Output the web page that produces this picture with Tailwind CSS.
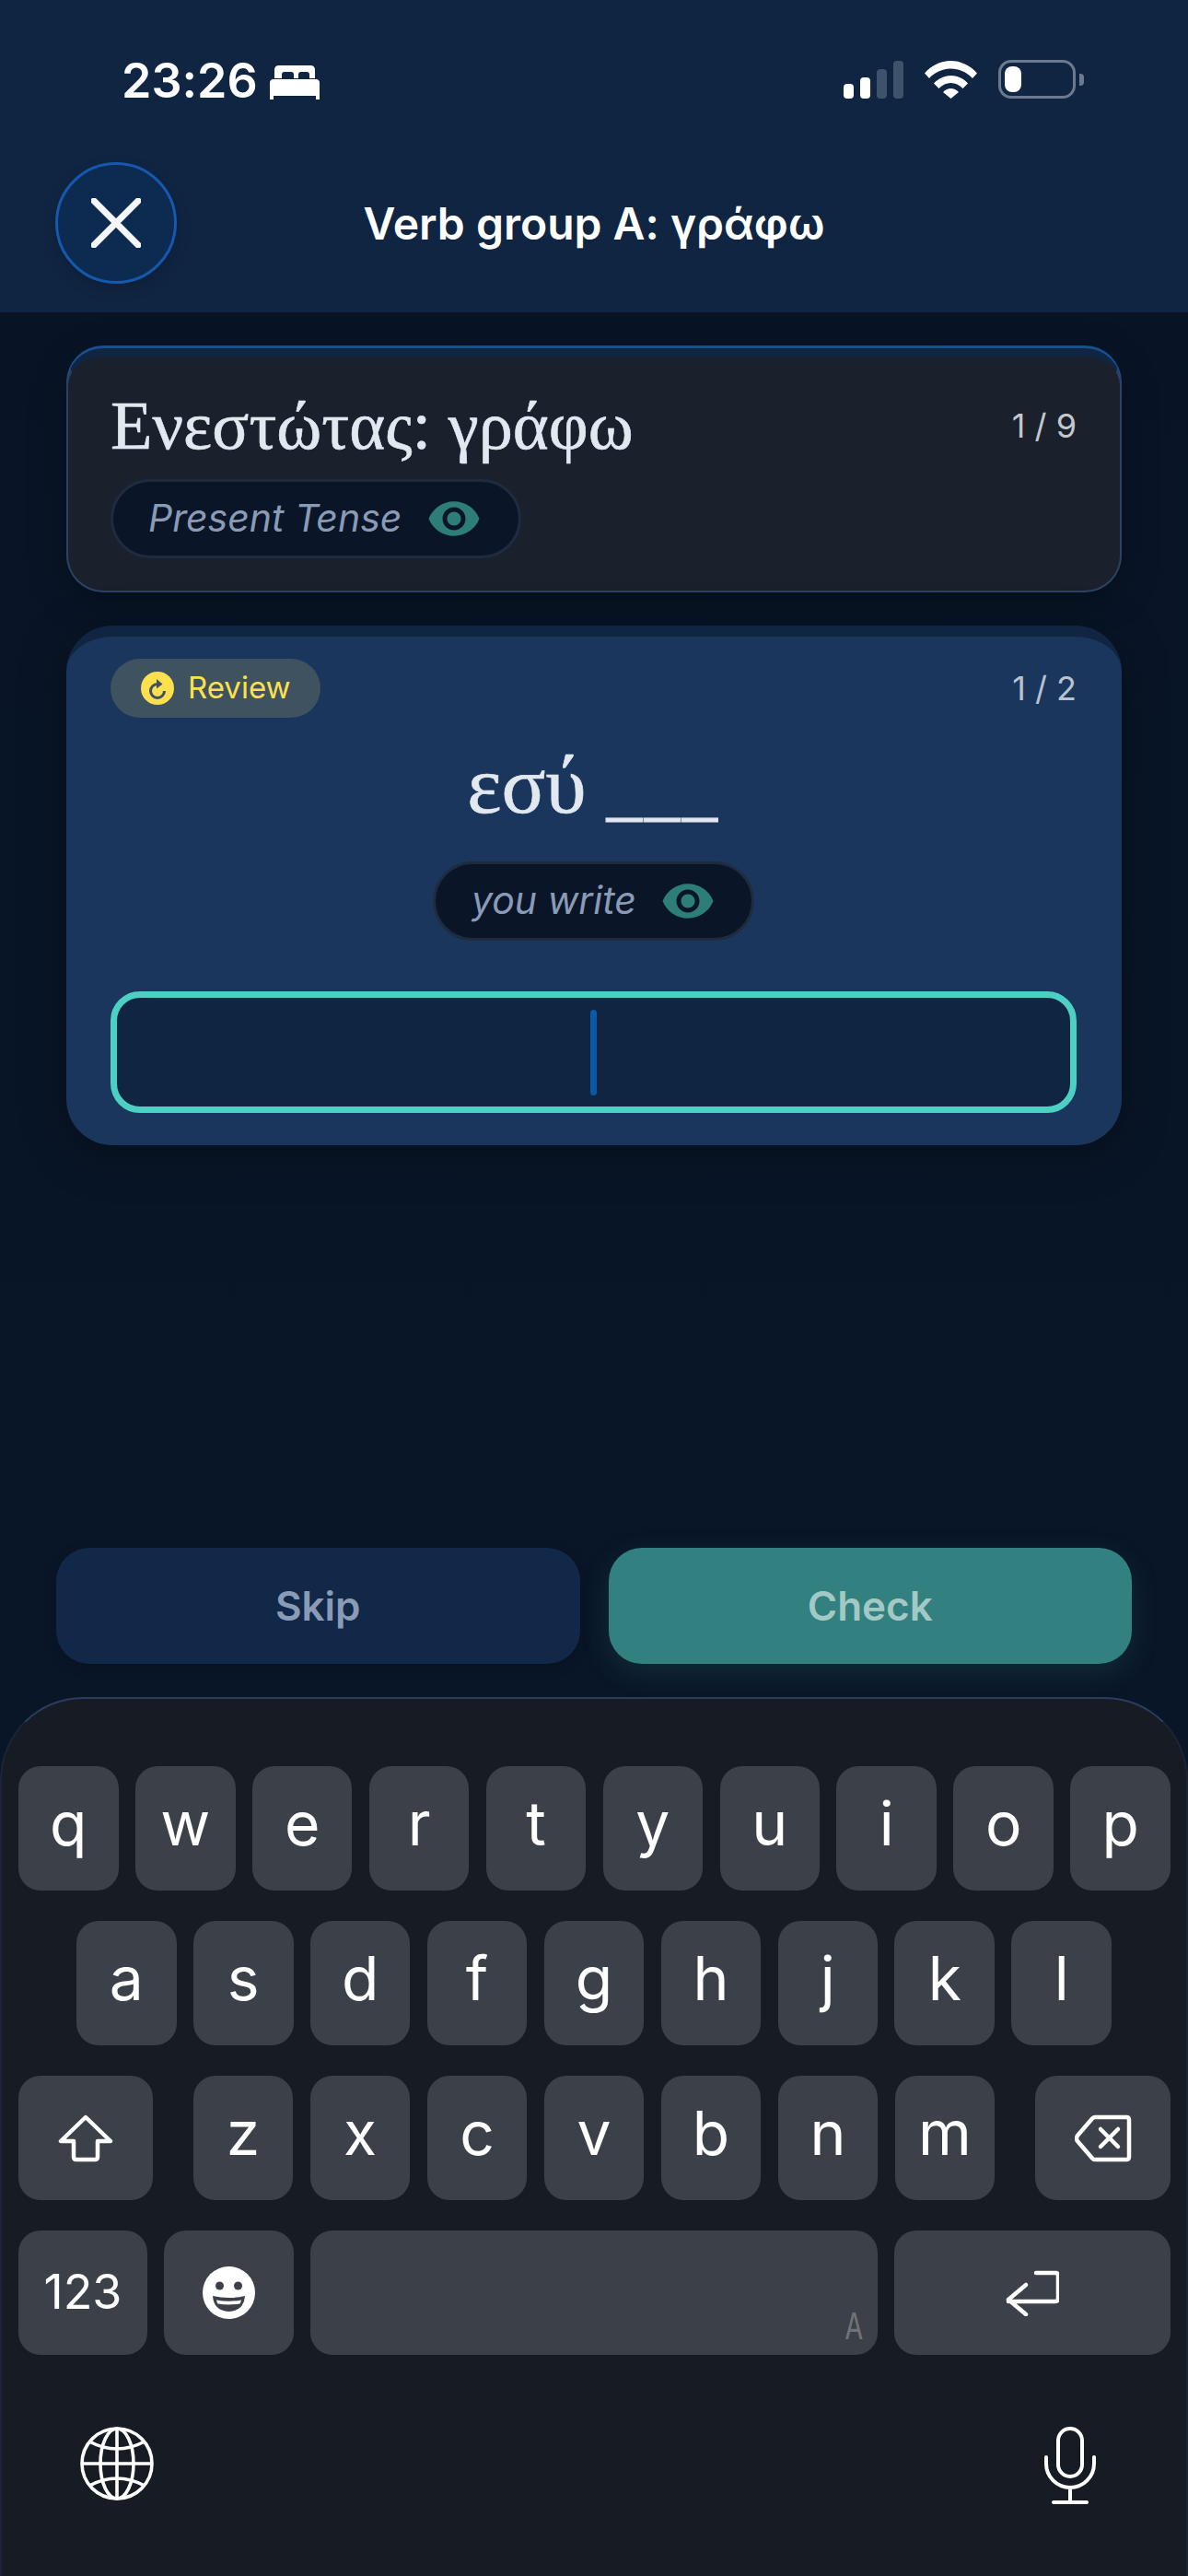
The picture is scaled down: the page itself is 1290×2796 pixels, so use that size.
<!DOCTYPE html>
<html lang="en">

<head>
    <meta charset="utf-8">
    <meta name="viewport" content="width=device-width, initial-scale=1">
    <title>Verb group A</title>
    <script src="https://cdn.jsdelivr.net/npm/@tailwindcss/browser@4"></script>
</head>

<body class="bg-[#081423]">
    <div class="relative w-[1290px] h-[2796px] flex flex-col font-['Inter',sans-serif] [font-feature-settings:'calt'_0] text-white bg-gradient-to-b from-[#081426] to-[#0a1729] overflow-hidden">

        <!-- header -->
        <header class="h-[339px] shrink-0 bg-[#102542]">
            <div class="flex justify-between items-center pt-[65px] pl-[132px] pr-[113px] h-[107px]">
                <div class="flex items-center gap-[13px]">
                    <span class="text-[52px] leading-[42px] font-semibold relative top-[2px]">23:26</span>
                    <svg class="w-[54px] h-[37px] relative top-[3px]" viewBox="0 0 54 37" fill="#fff">
                        <path d="M5 14V5q0-5 5-5h34q5 0 5 5v9h-6v-4q0-3-3-3h-6q-3 0-3 3v4h-5v-4q0-3-3-3h-7q-3 0-3 3v4z" />
                        <path d="M4 15h46q4 0 4 4v18h-4v-4H4v4H0V19q0-4 4-4z" />
                    </svg>
                </div>
                <div class="flex items-center">
                    <svg class="w-[65px] h-[41px]" viewBox="0 0 65 41">
                        <rect x="0" y="25" width="11" height="16" rx="4" fill="#fff" />
                        <rect x="18" y="18" width="11" height="23" rx="4" fill="#fff" />
                        <rect x="36" y="9" width="11" height="32" rx="4" fill="#3f526c" />
                        <rect x="54" y="0" width="11" height="41" rx="4" fill="#3f526c" />
                    </svg>
                    <svg class="ml-[23px] w-[57px] h-[41px]" viewBox="0 0 57 41" fill="#fff">
                        <path d="M0 13.500C16 -4.500 41 -4.500 57 13.500L52 19C39 5 18 5 5 19z" />
                        <path d="M10 24.500C20 13 37 13 47 24.500L41.500 30C34 22 23 22 15.500 30z" />
                        <path d="M20 34C25 28.500 32 28.500 37 34L28.500 41z" />
                    </svg>
                    <div class="ml-[23px] w-[84px] h-[42px] rounded-[14px] border-[3px] border-[#6b7a90] p-[4px]">
                        <div class="w-[18px] h-[28px] rounded-[8px] bg-white"></div>
                    </div>
                    <div class="ml-[4px] w-[5px] h-[13px] rounded-r-[4px] bg-[#6b7a90]"></div>
                </div>
            </div>
            <div class="grid grid-cols-[132px_1fr_132px] items-center mt-[69px] px-[60px]">
                <button class="w-[132px] h-[132px] rounded-full border-[3px] border-[#1558ad] bg-[#0d2a50] flex items-center justify-center shadow-[0_6px_16px_rgba(0,0,0,0.15)]">
                    <svg class="w-[54px] h-[54px]" viewBox="0 0 54 54" fill="none" stroke="#f4f6f8" stroke-width="7" stroke-linecap="round">
                        <path d="M3 3l48 48M51 3L3 51" />
                    </svg>
                </button>
                <h1 class="text-center text-[48px] font-semibold leading-none relative top-[1px]">Verb group A: γράφω</h1>
            </div>
        </header>

        <!-- cards -->
        <main class="flex-1 px-[72px] pt-[39px] flex flex-col gap-[36px]">
            <section class="h-[265px] rounded-[40px] bg-[#1a202c] border-2 border-[#2c4264] border-t-[9px] border-t-[#102542] shadow-[0_-3px_0_#174f91,0_8px_40px_rgba(0,0,0,0.3)] pl-[46px] pr-[47px]">
                <div class="flex justify-between items-start">
                    <h2 class="mt-[33px] text-[74.400px] leading-[84px] text-[#e2e8f0] font-['Liberation_Serif',serif] [-webkit-text-stroke:0.6px_#e2e8f0]">Ενεστώτας: γράφω</h2>
                    <span class="mt-[53px] text-[36px] leading-[44px] text-[#c4c8cd]">1 / 9</span>
                </div>
                <div class="mt-[16px] w-[446px] h-[86px] rounded-full border-[3px] border-[#1f2c40] bg-[#0a1628] flex items-center pl-[38px] gap-[27px]">
                    <span class="text-[41px] italic text-[#8a9bb5]">Present Tense</span>
                    <svg class="w-[60px] h-[60px]" viewBox="0 0 24 24" fill="#2d7d7a">
                        <path d="M12 4.500C7 4.500 2.730 7.610 1 12c1.730 4.390 6 7.500 11 7.500s9.270-3.110 11-7.500c-1.730-4.390-6-7.500-11-7.500zM12 17c-2.760 0-5-2.240-5-5s2.240-5 5-5 5 2.240 5 5-2.240 5-5 5zm0-8c-1.660 0-3 1.340-3 3s1.340 3 3 3 3-1.340 3-3-1.340-3-3-3z" />
                    </svg>
                </div>
            </section>

            <section class="h-[564px] rounded-[50px] bg-[#1b365d] border-t-[12px] border-t-[#102542] shadow-[0_10px_50px_rgba(0,0,0,0.35)] pl-[48px] pr-[49px] pt-[24px]">
                <div class="flex justify-between items-center">
                    <div class="w-[228px] h-[64px] rounded-full bg-[#3f5260] flex items-center pl-[33px] gap-[15px]">
                        <svg class="w-[36px] h-[36px]" viewBox="0 0 36 36">
                            <circle cx="18" cy="18" r="18" fill="#fde04f" />
                            <path d="M18 13.500A7.500 7.500 0 1 0 25.500 21" fill="none" stroke="#3f5260" stroke-width="3" />
                            <path d="M17 8l6.500 5.500-6.500 5z" fill="#3f5260" />
                        </svg>
                        <span class="text-[33px] text-[#fde04f]">Review</span>
                    </div>
                    <span class="text-[36px] leading-[44px] text-[#b9c2ce]">1 / 2</span>
                </div>
                <p class="mt-[27px] text-center text-[89px] leading-[92px] text-[#e2e8f0] font-['Liberation_Serif',serif] [-webkit-text-stroke:0.6px_#e2e8f0]">εσύ <span class="text-[76px] tracking-[3px] [-webkit-text-stroke:1.2px_#e2e8f0]">___</span></p>
                <div class="mt-[33px] flex justify-center">
                    <div class="w-[349px] h-[86px] rounded-full border-[3px] border-[#1f2c40] bg-[#0a1628] flex items-center pl-[39px] gap-[26px]">
                        <span class="text-[41px] italic text-[#8a9bb5]">you write</span>
                        <svg class="w-[60px] h-[60px]" viewBox="0 0 24 24" fill="#2d7d7a">
                            <path d="M12 4.500C7 4.500 2.730 7.610 1 12c1.730 4.390 6 7.500 11 7.500s9.270-3.110 11-7.500c-1.730-4.390-6-7.500-11-7.500zM12 17c-2.760 0-5-2.240-5-5s2.240-5 5-5 5 2.240 5 5-2.240 5-5 5zm0-8c-1.660 0-3 1.340-3 3s1.340 3 3 3 3-1.340 3-3-1.340-3-3-3z" />
                        </svg>
                    </div>
                </div>
                <div class="mt-[55px] h-[132px] rounded-[32px] border-[7px] border-[#4dd0c4] bg-[#102542] flex items-center justify-center">
                    <div class="w-[7px] h-[93px] rounded-full bg-[#0b5aa5]"></div>
                </div>
            </section>
        </main>

        <!-- actions -->
        <div class="shrink-0 flex gap-[31px] px-[61px] pb-[36px]">
            <button class="w-[569px] h-[126px] rounded-[36px] bg-[#122848] text-[#8a9bb5] text-[44px] font-semibold shadow-[0_4px_14px_rgba(0,0,0,0.2)]">Skip</button>
            <button class="w-[569px] h-[126px] rounded-[36px] bg-[#328080] text-[#a3c9c5] text-[44px] font-semibold shadow-[0_10px_30px_rgba(50,128,128,0.2)]">Check</button>
        </div>

        <!-- keyboard -->
        <div class="shrink-0 h-[954px] rounded-t-[90px] bg-[#161b24] border-t-2 border-x-2 border-t-[#2a3d5e] border-x-[#1b2535] border-b-0 pl-[18px] pr-[17px] pt-[73px] text-[66px]">
            <div class="flex justify-between">
                <div class="w-[108.600px] h-[135px] rounded-[24px] bg-[#3c4048] flex items-center justify-center pb-[10px]">q</div>
                <div class="w-[108.600px] h-[135px] rounded-[24px] bg-[#3c4048] flex items-center justify-center pb-[10px]">w</div>
                <div class="w-[108.600px] h-[135px] rounded-[24px] bg-[#3c4048] flex items-center justify-center pb-[10px]">e</div>
                <div class="w-[108.600px] h-[135px] rounded-[24px] bg-[#3c4048] flex items-center justify-center pb-[10px]">r</div>
                <div class="w-[108.600px] h-[135px] rounded-[24px] bg-[#3c4048] flex items-center justify-center pb-[10px]">t</div>
                <div class="w-[108.600px] h-[135px] rounded-[24px] bg-[#3c4048] flex items-center justify-center pb-[10px]">y</div>
                <div class="w-[108.600px] h-[135px] rounded-[24px] bg-[#3c4048] flex items-center justify-center pb-[10px]">u</div>
                <div class="w-[108.600px] h-[135px] rounded-[24px] bg-[#3c4048] flex items-center justify-center pb-[10px]">i</div>
                <div class="w-[108.600px] h-[135px] rounded-[24px] bg-[#3c4048] flex items-center justify-center pb-[10px]">o</div>
                <div class="w-[108.600px] h-[135px] rounded-[24px] bg-[#3c4048] flex items-center justify-center pb-[10px]">p</div>
            </div>
            <div class="flex justify-between mt-[33px] pl-[63px] pr-[64px]">
                <div class="w-[108.600px] h-[135px] rounded-[24px] bg-[#3c4048] flex items-center justify-center pb-[10px]">a</div>
                <div class="w-[108.600px] h-[135px] rounded-[24px] bg-[#3c4048] flex items-center justify-center pb-[10px]">s</div>
                <div class="w-[108.600px] h-[135px] rounded-[24px] bg-[#3c4048] flex items-center justify-center pb-[10px]">d</div>
                <div class="w-[108.600px] h-[135px] rounded-[24px] bg-[#3c4048] flex items-center justify-center pb-[10px]">f</div>
                <div class="w-[108.600px] h-[135px] rounded-[24px] bg-[#3c4048] flex items-center justify-center pb-[10px]">g</div>
                <div class="w-[108.600px] h-[135px] rounded-[24px] bg-[#3c4048] flex items-center justify-center pb-[10px]">h</div>
                <div class="w-[108.600px] h-[135px] rounded-[24px] bg-[#3c4048] flex items-center justify-center pb-[10px]">j</div>
                <div class="w-[108.600px] h-[135px] rounded-[24px] bg-[#3c4048] flex items-center justify-center pb-[10px]">k</div>
                <div class="w-[108.600px] h-[135px] rounded-[24px] bg-[#3c4048] flex items-center justify-center pb-[10px]">l</div>
            </div>
            <div class="flex justify-between mt-[33px]">
                <div class="w-[146px] h-[135px] rounded-[24px] bg-[#3c4048] flex items-center justify-center">
                    <svg class="w-[60px] h-[52px]" viewBox="0 0 60 52" fill="none" stroke="#fff" stroke-width="4.500" stroke-linejoin="round">
                        <path d="M30 3L3 29h14v17q0 3 3 3h20q3 0 3-3V29h14z" />
                    </svg>
                </div>
                <div class="flex gap-[18.400px]">
                    <div class="w-[108.600px] h-[135px] rounded-[24px] bg-[#3c4048] flex items-center justify-center pb-[10px]">z</div>
                    <div class="w-[108.600px] h-[135px] rounded-[24px] bg-[#3c4048] flex items-center justify-center pb-[10px]">x</div>
                    <div class="w-[108.600px] h-[135px] rounded-[24px] bg-[#3c4048] flex items-center justify-center pb-[10px]">c</div>
                    <div class="w-[108.600px] h-[135px] rounded-[24px] bg-[#3c4048] flex items-center justify-center pb-[10px]">v</div>
                    <div class="w-[108.600px] h-[135px] rounded-[24px] bg-[#3c4048] flex items-center justify-center pb-[10px]">b</div>
                    <div class="w-[108.600px] h-[135px] rounded-[24px] bg-[#3c4048] flex items-center justify-center pb-[10px]">n</div>
                    <div class="w-[108.600px] h-[135px] rounded-[24px] bg-[#3c4048] flex items-center justify-center pb-[10px]">m</div>
                </div>
                <div class="w-[147px] h-[135px] rounded-[24px] bg-[#3c4048] flex items-center justify-center">
                    <svg class="w-[62px] h-[52px]" viewBox="0 0 62 52" fill="none" stroke="#fff" stroke-width="4.500" stroke-linejoin="round" stroke-linecap="round">
                        <path d="M22 3h34q3 0 3 3v40q0 3-3 3H22q-2 0-3-1.500L3 29q-2-3 0-6L19 4.500Q20 3 22 3z" />
                        <path d="M28 16l19 19M47 16L28 35" />
                    </svg>
                </div>
            </div>
            <div class="flex justify-between mt-[33px]">
                <div class="w-[140px] h-[135px] rounded-[24px] bg-[#3c4048] flex items-center justify-center text-[52px] pb-[2px]">123</div>
                <div class="w-[141px] h-[135px] rounded-[24px] bg-[#3c4048] flex items-center justify-center">
                    <svg class="w-[57px] h-[57px]" viewBox="0 0 57 57">
                        <circle cx="28.500" cy="28.500" r="28.500" fill="#fff" />
                        <circle cx="18.500" cy="21" r="4.500" fill="#3c4048" />
                        <circle cx="38.500" cy="21" r="4.500" fill="#3c4048" />
                        <path d="M11 32q17.500 4 35 0q-1 16-17.500 17Q12 48 11 32z" fill="#3c4048" />
                        <path d="M15 36.500q13.500 2.500 27 0q-.5 2.500-1.500 4q-12 2-24 0q-1-1.500-1.500-4z" fill="#fff" />
                    </svg>
                </div>
                <div class="w-[616px] h-[135px] rounded-[24px] bg-[#3c4048] flex items-end justify-end pr-[13px] pb-[7px]">
                    <span class="text-[44px] leading-[44px] scale-x-[0.7] text-[#6f7278] font-['Liberation_Mono',monospace]">A</span>
                </div>
                <div class="w-[300px] h-[135px] rounded-[24px] bg-[#3c4048] flex items-center justify-center">
                    <svg class="w-[58px] h-[50px]" viewBox="0 0 58 50" fill="none" stroke="#fff" stroke-width="4.500" stroke-linejoin="round" stroke-linecap="round">
                        <path d="M33 3h21q3 0 3 3v25q0 3-3 3H3M22 16L3 32l19 16" />
                    </svg>
                </div>
            </div>
            <div class="flex justify-between items-start mt-[78px] pl-[67px] pr-[81px]">
                <svg class="w-[80px] h-[80px]" viewBox="0 0 80 80" fill="none" stroke="#fff" stroke-width="3.600">
                    <circle cx="40" cy="40" r="38" />
                    <ellipse cx="40" cy="40" rx="18" ry="38" />
                    <path d="M40 2v76M2 40h76M10 16q30 16 60 0M10 64q30-16 60 0" />
                </svg>
                <svg class="w-[56px] h-[84px]" viewBox="0 0 56 84" fill="none" stroke="#fff" stroke-width="4" stroke-linecap="round">
                    <rect x="15" y="2" width="26" height="52" rx="13" />
                    <path d="M2 33v7a26 26 0 0 0 52 0v-7M28 66v15M10 82h36" />
                </svg>
            </div>
        </div>
    </div>
</body>

</html>
